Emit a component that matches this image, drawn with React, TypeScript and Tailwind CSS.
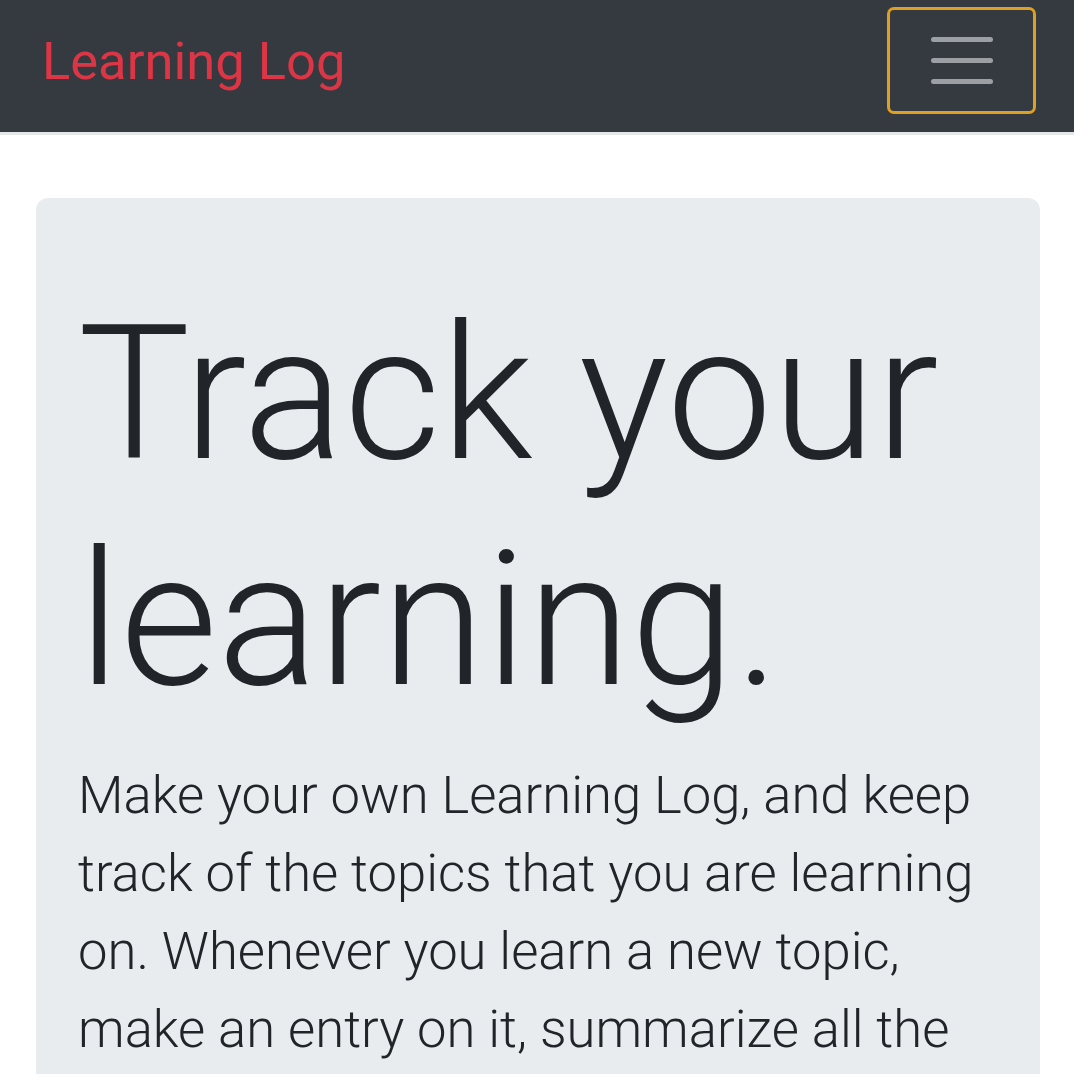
import React from 'react';

const App: React.FC = () => {
  return (
    <div className="min-h-screen bg-white" style={{ fontFamily: 'Roboto, "Liberation Sans", sans-serif' }}>
      {/* NAVBAR */}
      <nav className="h-[135px] bg-[#343a40] border-b-[3px] border-[#e4e6e9] flex items-start justify-between pl-[42px] pr-[38px]">
        <a className="mt-[22px] text-[52.5px] leading-[78px] text-[#dc3545] font-normal whitespace-nowrap">
          Learning Log
        </a>
        <button className="mt-[7px] w-[149px] h-[107px] rounded-[7px] border-[3px] border-[#dda020] flex flex-col items-center justify-center gap-[16px]">
          <span className="block w-[62px] h-[5px] rounded-full bg-[#9c9fa3]"></span>
          <span className="block w-[62px] h-[5px] rounded-full bg-[#9c9fa3]"></span>
          <span className="block w-[62px] h-[5px] rounded-full bg-[#9c9fa3]"></span>
        </button>
      </nav>

      {/* JUMBOTRON */}
      <div className="pl-[36px] pr-[34px] pt-[63px]">
        <div className="bg-[#e9ecef] rounded-[12px] pt-[84px] pb-[84px] pl-[42px] pr-[40px] text-[#212529]">
          <h1 className="text-[188px] leading-[1.2] font-light mb-[23px]">
            Track your learning.
          </h1>
          <p className="text-[52.6px] leading-[78px] font-light">
            Make your own Learning Log, and keep track of the topics that you are learning on. Whenever you learn a new topic, make an entry on it, summarize all the things you have learned, and look back on your progress any time.
          </p>
        </div>
      </div>
    </div>
  );
};

export default App;
